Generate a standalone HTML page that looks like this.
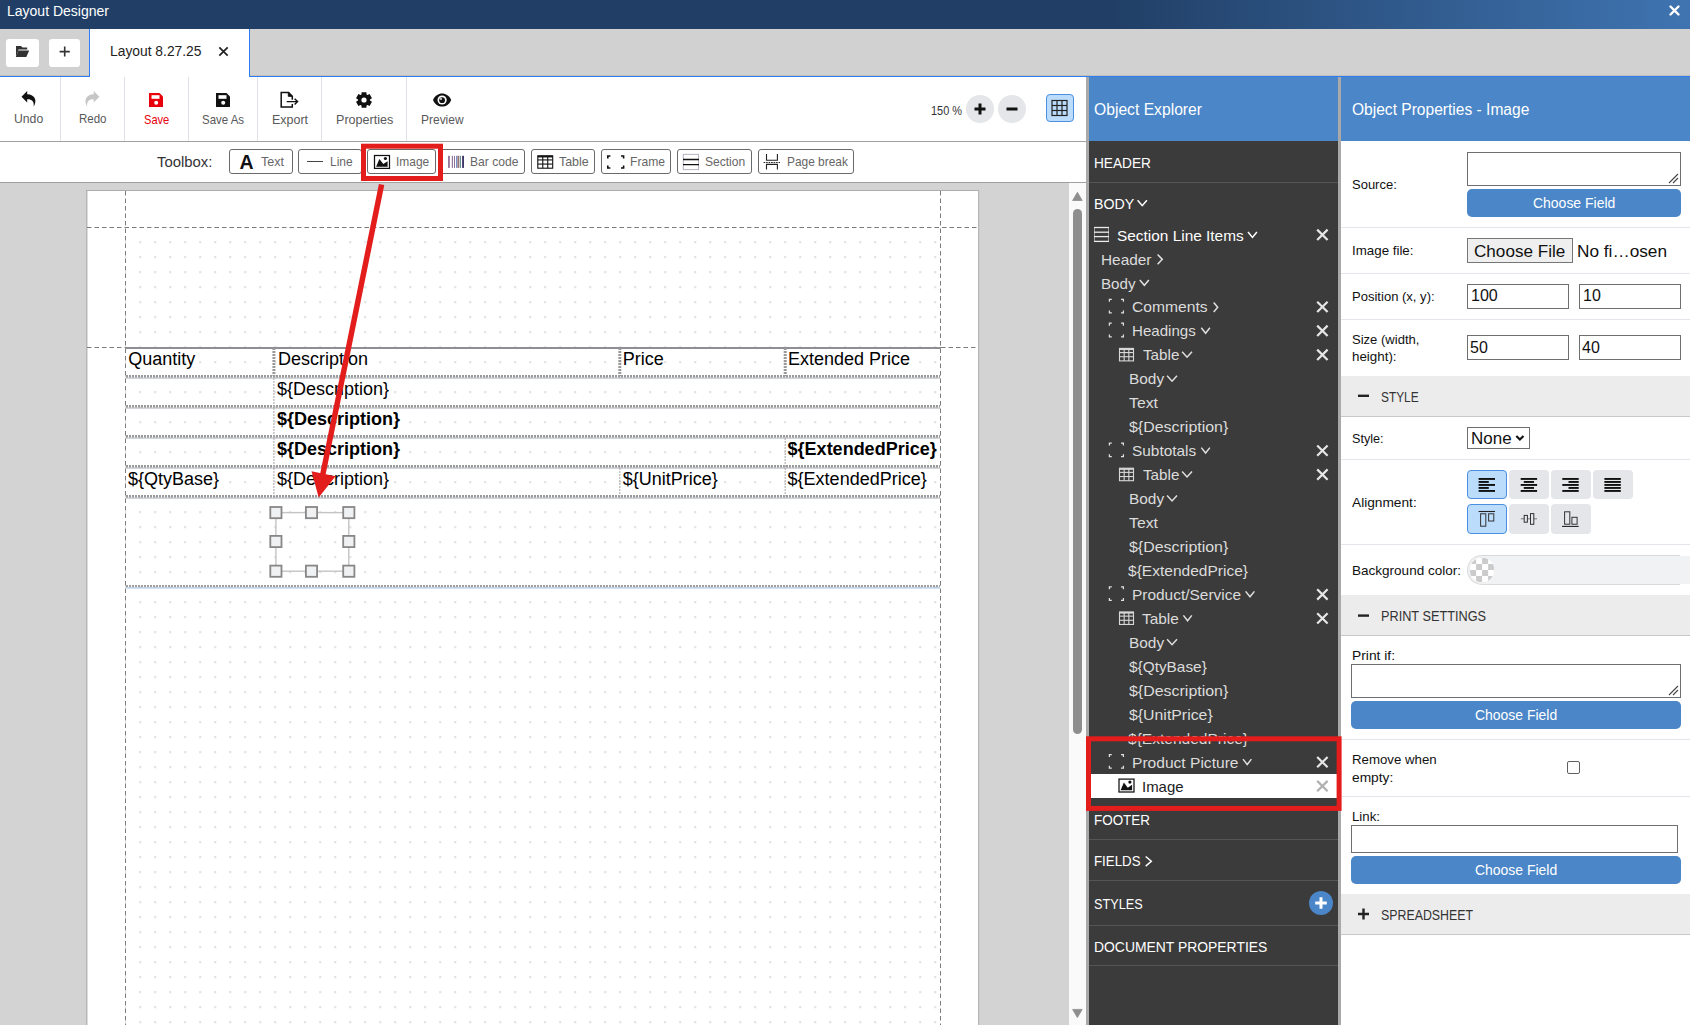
<!DOCTYPE html>
<html><head><meta charset="utf-8"><style>
*{box-sizing:border-box;margin:0;padding:0}
html,body{width:1690px;height:1025px;overflow:hidden;background:#fff;font-family:"Liberation Sans",sans-serif}
body{position:relative}
.a{position:absolute}
.t{position:absolute;white-space:nowrap;line-height:1;transform-origin:0 0}
svg{position:absolute;left:0;top:0;overflow:visible}
</style></head><body>
<div class="a" style="left:0px;top:0px;width:1690px;height:29px;background:linear-gradient(to right,#213f66 0,#213f66 1110px,#3f74b1 1690px);"></div>
<div class="a" style="left:0px;top:29px;width:1690px;height:46px;background:#d1d1d1;"></div>
<div class="a" style="left:0px;top:75px;width:1690px;height:1px;background:#c4c0b8;"></div>
<div class="a" style="left:0px;top:76px;width:1690px;height:1px;background:#2f7df6;"></div>
<div class="a" style="left:89px;top:29px;width:161px;height:48px;background:#fff;border-left:1px solid #2f7df6;border-right:1px solid #2f7df6"></div>
<div class="a" style="left:6px;top:39px;width:33px;height:28px;background:#fff;border-radius:3px"></div>
<div class="a" style="left:49px;top:39px;width:31px;height:28px;background:#fff;border-radius:3px"></div>
<div class="a" style="left:0px;top:77px;width:1086px;height:64px;background:#fff;"></div>
<div class="a" style="left:0px;top:141px;width:1086px;height:1px;background:#a0a0a0;"></div>
<div class="a" style="left:60px;top:77px;width:1px;height:64px;background:#dfe3e8;"></div>
<div class="a" style="left:124px;top:77px;width:1px;height:64px;background:#dfe3e8;"></div>
<div class="a" style="left:188px;top:77px;width:1px;height:64px;background:#dfe3e8;"></div>
<div class="a" style="left:257px;top:77px;width:1px;height:64px;background:#dfe3e8;"></div>
<div class="a" style="left:321px;top:77px;width:1px;height:64px;background:#dfe3e8;"></div>
<div class="a" style="left:406px;top:77px;width:1px;height:64px;background:#dfe3e8;"></div>
<div class="a" style="left:966px;top:95px;width:28px;height:28px;background:#e4e6e9;border-radius:50%"></div>
<div class="a" style="left:998px;top:95px;width:28px;height:28px;background:#e4e6e9;border-radius:50%"></div>
<div class="a" style="left:1046px;top:94px;width:28px;height:28px;background:#bcdcfb;border:1px solid #4a8fe0;border-radius:4px"></div>
<div class="a" style="left:0px;top:142px;width:1086px;height:40px;background:#fff;"></div>
<div class="a" style="left:0px;top:182px;width:1086px;height:1px;background:#a0a0a0;"></div>
<div class="a" style="left:229px;top:149px;width:64px;height:25px;background:#fff;border:1px solid #6a6a6a;border-radius:3px"></div>
<div class="a" style="left:298px;top:149px;width:63.5px;height:25px;background:#fff;border:1px solid #6a6a6a;border-radius:3px"></div>
<div class="a" style="left:367px;top:149px;width:69px;height:25px;background:#fff;border:1px solid #6a6a6a;border-radius:3px"></div>
<div class="a" style="left:440px;top:149px;width:85px;height:25px;background:#fff;border:1px solid #6a6a6a;border-radius:3px"></div>
<div class="a" style="left:530.5px;top:149px;width:64.5px;height:25px;background:#fff;border:1px solid #6a6a6a;border-radius:3px"></div>
<div class="a" style="left:600.5px;top:149px;width:70.5px;height:25px;background:#fff;border:1px solid #6a6a6a;border-radius:3px"></div>
<div class="a" style="left:676.5px;top:149px;width:75.5px;height:25px;background:#fff;border:1px solid #6a6a6a;border-radius:3px"></div>
<div class="a" style="left:757.5px;top:149px;width:96.5px;height:25px;background:#fff;border:1px solid #6a6a6a;border-radius:3px"></div>
<div class="a" style="left:0px;top:183px;width:1069px;height:842px;background:#d3d3d3;"></div>
<div class="a" style="left:1069px;top:183px;width:17px;height:842px;background:#fafafa;"></div>
<div class="a" style="left:1073px;top:209px;width:9px;height:525px;background:#8e8e8e;border-radius:4.5px"></div>
<div class="a" style="left:1086px;top:77px;width:3px;height:948px;background:#a9a9a9;"></div>
<div class="a" style="left:1338px;top:77px;width:3px;height:948px;background:#a9a9a9;"></div>
<div class="a" style="left:1089px;top:77px;width:249px;height:64px;background:#4a86c8;"></div>
<div class="a" style="left:1089px;top:141px;width:249px;height:884px;background:#3b3b3b;"></div>
<div class="a" style="left:1089px;top:182px;width:249px;height:1px;background:#555;"></div>
<div class="a" style="left:1089px;top:839px;width:249px;height:1px;background:#555;"></div>
<div class="a" style="left:1089px;top:880px;width:249px;height:1px;background:#555;"></div>
<div class="a" style="left:1089px;top:925px;width:249px;height:1px;background:#555;"></div>
<div class="a" style="left:1089px;top:965px;width:249px;height:1px;background:#555;"></div>
<div class="a" style="left:1089px;top:774px;width:249px;height:24px;background:#fff;"></div>
<div class="a" style="left:1309px;top:891px;width:24px;height:24px;background:#4a86c8;border-radius:50%"></div>
<div class="a" style="left:1341px;top:77px;width:349px;height:64px;background:#4a86c8;"></div>
<div class="a" style="left:1341px;top:141px;width:349px;height:884px;background:#fff;"></div>
<div class="a" style="left:1341px;top:227px;width:349px;height:1px;background:#e3e6ea;"></div>
<div class="a" style="left:1341px;top:273px;width:349px;height:1px;background:#e3e6ea;"></div>
<div class="a" style="left:1341px;top:319px;width:349px;height:1px;background:#e3e6ea;"></div>
<div class="a" style="left:1341px;top:459px;width:349px;height:1px;background:#e3e6ea;"></div>
<div class="a" style="left:1341px;top:544px;width:349px;height:1px;background:#e3e6ea;"></div>
<div class="a" style="left:1341px;top:739px;width:349px;height:1px;background:#e3e6ea;"></div>
<div class="a" style="left:1341px;top:796px;width:349px;height:1px;background:#e3e6ea;"></div>
<div class="a" style="left:1341px;top:376px;width:349px;height:40px;background:#ececec;"></div>
<div class="a" style="left:1341px;top:416px;width:349px;height:1px;background:#c8c8c8;"></div>
<div class="a" style="left:1341px;top:595px;width:349px;height:40px;background:#ececec;"></div>
<div class="a" style="left:1341px;top:635px;width:349px;height:1px;background:#c8c8c8;"></div>
<div class="a" style="left:1341px;top:894px;width:349px;height:40px;background:#ececec;"></div>
<div class="a" style="left:1341px;top:934px;width:349px;height:1px;background:#c8c8c8;"></div>
<div class="a" style="left:1467px;top:152px;width:214px;height:34px;background:#fff;border:1px solid #6f6f6f;"></div>
<div class="a" style="left:1467px;top:189px;width:214px;height:28px;background:#4a86c8;border-radius:5px"></div>
<div class="a" style="left:1467px;top:238px;width:106px;height:25px;background:#efefef;border:1px solid #767676;"></div>
<div class="a" style="left:1467px;top:284px;width:102px;height:25px;background:#fff;border:1px solid #6f6f6f;"></div>
<div class="a" style="left:1579px;top:284px;width:102px;height:25px;background:#fff;border:1px solid #6f6f6f;"></div>
<div class="a" style="left:1467px;top:335px;width:102px;height:25px;background:#fff;border:1px solid #6f6f6f;"></div>
<div class="a" style="left:1579px;top:335px;width:102px;height:25px;background:#fff;border:1px solid #6f6f6f;"></div>
<div class="a" style="left:1467px;top:427px;width:63px;height:22px;background:#fff;border:1px solid #6f6f6f;"></div>
<div class="a" style="left:1467.4px;top:470px;width:39.5px;height:29px;background:#bcdcfb;border:1px solid #4a8fe0;border-radius:4px"></div>
<div class="a" style="left:1509.4px;top:470px;width:39.5px;height:29px;background:#e4e6e9;border-radius:4px"></div>
<div class="a" style="left:1551.4px;top:470px;width:39.5px;height:29px;background:#e4e6e9;border-radius:4px"></div>
<div class="a" style="left:1593.4px;top:470px;width:39.5px;height:29px;background:#e4e6e9;border-radius:4px"></div>
<div class="a" style="left:1467.4px;top:504px;width:39.5px;height:30px;background:#bcdcfb;border:1px solid #4a8fe0;border-radius:4px"></div>
<div class="a" style="left:1509.4px;top:504px;width:39.5px;height:30px;background:#e4e6e9;border-radius:4px"></div>
<div class="a" style="left:1551.4px;top:504px;width:39.5px;height:30px;background:#e4e6e9;border-radius:4px"></div>
<div class="a" style="left:1467px;top:555px;width:213px;height:30px;background:#f1f2f4;border:1px solid #d9dadc;border-right:none;border-radius:15px 0 0 15px"></div>
<div class="a" style="left:1680px;top:556px;width:10px;height:28px;background:#f1f2f4;"></div>
<div class="a" style="left:1351px;top:664px;width:330px;height:34px;background:#fff;border:1px solid #6f6f6f;"></div>
<div class="a" style="left:1351px;top:701px;width:330px;height:28px;background:#4a86c8;border-radius:5px"></div>
<div class="a" style="left:1567px;top:761px;width:13px;height:13px;background:#fff;border:1px solid #5f5f5f;border-radius:2px"></div>
<div class="a" style="left:1351px;top:825px;width:327px;height:28px;background:#fff;border:1px solid #6f6f6f;"></div>
<div class="a" style="left:1351px;top:856px;width:330px;height:28px;background:#4a86c8;border-radius:5px"></div>
<svg width="1690" height="1025">
<defs><pattern id="dots" x="139.4" y="241.35" width="15" height="15" patternUnits="userSpaceOnUse"><rect x="0" y="0" width="1.5" height="1.5" fill="#c2c2c2"/></pattern></defs>
<rect x="86" y="190" width="894" height="840" fill="#cccccc"/>
<rect x="86" y="190" width="893" height="840" fill="#b6b6b6"/>
<rect x="87" y="191" width="891" height="840" fill="#fff"/>
<rect x="87" y="191" width="1" height="840" fill="#dedede"/>
<rect x="86" y="190" width="892" height="1" fill="#adadad"/>
<rect x="125" y="227" width="815" height="800" fill="url(#dots)"/>
<g stroke="#7c7c7c" stroke-width="1" stroke-dasharray="4.5 3" fill="none">
<line x1="125.5" y1="191" x2="125.5" y2="1025"/>
<line x1="940.5" y1="191" x2="940.5" y2="1025"/>
<line x1="87" y1="227.5" x2="978" y2="227.5"/>
<line x1="87" y1="347.5" x2="125" y2="347.5"/>
<line x1="941" y1="347.5" x2="978" y2="347.5"/>
</g>
<line x1="125" y1="348" x2="941" y2="348" stroke="#8d8f92" stroke-width="2"/>
<line x1="126" y1="376.4" x2="940" y2="376.4" stroke="#9a9a9a" stroke-width="2.6" stroke-dasharray="2 1"/>
<line x1="126" y1="378.1" x2="940" y2="378.1" stroke="#b3b8c0" stroke-width="1"/>
<line x1="126" y1="406.4" x2="940" y2="406.4" stroke="#9a9a9a" stroke-width="2.6" stroke-dasharray="2 1"/>
<line x1="126" y1="408.1" x2="940" y2="408.1" stroke="#b3b8c0" stroke-width="1"/>
<line x1="126" y1="436.4" x2="940" y2="436.4" stroke="#9a9a9a" stroke-width="2.6" stroke-dasharray="2 1"/>
<line x1="126" y1="438.1" x2="940" y2="438.1" stroke="#b3b8c0" stroke-width="1"/>
<line x1="126" y1="466.4" x2="940" y2="466.4" stroke="#9a9a9a" stroke-width="2.6" stroke-dasharray="2 1"/>
<line x1="126" y1="468.1" x2="940" y2="468.1" stroke="#b3b8c0" stroke-width="1"/>
<line x1="126" y1="496.4" x2="940" y2="496.4" stroke="#9a9a9a" stroke-width="2.6" stroke-dasharray="2 1"/>
<line x1="126" y1="498.1" x2="940" y2="498.1" stroke="#b3b8c0" stroke-width="1"/>
<line x1="126" y1="586" x2="940" y2="586" stroke="#9f9f9f" stroke-width="2" stroke-dasharray="2 1"/>
<line x1="126" y1="587.8" x2="940" y2="587.8" stroke="#a9c3e2" stroke-width="1.2"/>
<line x1="273.9" y1="348" x2="273.9" y2="376" stroke="#999" stroke-width="3" stroke-dasharray="2 1"/>
<line x1="273.9" y1="378" x2="273.9" y2="496" stroke="#b5b5b5" stroke-width="1.2" stroke-dasharray="2 1"/>
<line x1="619.8" y1="348" x2="619.8" y2="376" stroke="#999" stroke-width="3" stroke-dasharray="2 1"/>
<line x1="619.8" y1="468" x2="619.8" y2="496" stroke="#b5b5b5" stroke-width="1.2" stroke-dasharray="2 1"/>
<line x1="785.2" y1="348" x2="785.2" y2="376" stroke="#999" stroke-width="3" stroke-dasharray="2 1"/>
<line x1="785.2" y1="438" x2="785.2" y2="496" stroke="#b5b5b5" stroke-width="1.2" stroke-dasharray="2 1"/>
<rect x="275.9" y="512.6" width="72.9" height="58.6" fill="none" stroke="#c4c4c4" stroke-width="1.4"/>
<rect x="270.29999999999995" y="507.0" width="11.2" height="11.2" fill="#f0f1f3" stroke="#878787" stroke-width="1.8"/>
<rect x="270.29999999999995" y="535.9" width="11.2" height="11.2" fill="#f0f1f3" stroke="#878787" stroke-width="1.8"/>
<rect x="270.29999999999995" y="565.6" width="11.2" height="11.2" fill="#f0f1f3" stroke="#878787" stroke-width="1.8"/>
<rect x="305.9" y="507.0" width="11.2" height="11.2" fill="#f0f1f3" stroke="#878787" stroke-width="1.8"/>
<rect x="305.9" y="565.6" width="11.2" height="11.2" fill="#f0f1f3" stroke="#878787" stroke-width="1.8"/>
<rect x="343.2" y="507.0" width="11.2" height="11.2" fill="#f0f1f3" stroke="#878787" stroke-width="1.8"/>
<rect x="343.2" y="535.9" width="11.2" height="11.2" fill="#f0f1f3" stroke="#878787" stroke-width="1.8"/>
<rect x="343.2" y="565.6" width="11.2" height="11.2" fill="#f0f1f3" stroke="#878787" stroke-width="1.8"/>
</svg>
<div class="t" style="left:7.0px;top:4px;font-size:14px;color:#fff;transform:scaleX(1.0005);">Layout Designer</div>
<div class="t" style="left:110.3px;top:44px;font-size:14px;color:#222;transform:scaleX(0.9877);">Layout 8.27.25</div>
<div class="t" style="left:13.8px;top:112px;font-size:13px;color:#595959;transform:scaleX(0.9396);">Undo</div>
<div class="t" style="left:78.5px;top:112px;font-size:13px;color:#595959;transform:scaleX(0.8849);">Redo</div>
<div class="t" style="left:143.5px;top:113px;font-size:13px;color:#e8000b;transform:scaleX(0.8536);">Save</div>
<div class="t" style="left:202.0px;top:113px;font-size:13px;color:#595959;transform:scaleX(0.8804);">Save As</div>
<div class="t" style="left:271.7px;top:113px;font-size:13px;color:#595959;transform:scaleX(0.9580);">Export</div>
<div class="t" style="left:335.6px;top:113px;font-size:13px;color:#595959;transform:scaleX(0.9671);">Properties</div>
<div class="t" style="left:420.9px;top:113px;font-size:13px;color:#595959;transform:scaleX(0.9211);">Preview</div>
<div class="t" style="left:931.0px;top:105px;font-size:12px;color:#333;transform:scaleX(0.9109);">150 %</div>
<div class="t" style="left:157.1px;top:155px;font-size:14px;color:#333;transform:scaleX(1.0622);">Toolbox:</div>
<div class="t" style="left:261.0px;top:155px;font-size:13px;color:#666;transform:scaleX(0.9646);">Text</div>
<div class="t" style="left:329.8px;top:155px;font-size:13px;color:#666;transform:scaleX(0.9195);">Line</div>
<div class="t" style="left:396.4px;top:155px;font-size:13px;color:#666;transform:scaleX(0.9186);">Image</div>
<div class="t" style="left:470.4px;top:155px;font-size:13px;color:#666;transform:scaleX(0.9299);">Bar code</div>
<div class="t" style="left:559.4px;top:155px;font-size:13px;color:#666;transform:scaleX(0.9557);">Table</div>
<div class="t" style="left:630.0px;top:155px;font-size:13px;color:#666;transform:scaleX(0.9318);">Frame</div>
<div class="t" style="left:704.9px;top:155px;font-size:13px;color:#666;transform:scaleX(0.9268);">Section</div>
<div class="t" style="left:786.6px;top:155px;font-size:13px;color:#666;transform:scaleX(0.9158);">Page break</div>
<div class="t" style="left:128.3px;top:350px;font-size:18px;color:#000;">Quantity</div>
<div class="t" style="left:278.0px;top:350px;font-size:18px;color:#000;">Description</div>
<div class="t" style="left:622.8px;top:350px;font-size:18px;color:#000;">Price</div>
<div class="t" style="left:788.0px;top:350px;font-size:18px;color:#000;">Extended Price</div>
<div class="t" style="left:277.0px;top:380px;font-size:18px;color:#000;">${Description}</div>
<div class="t" style="left:277.0px;top:410px;font-size:18px;color:#000;font-weight:bold;">${Description}</div>
<div class="t" style="left:277.0px;top:440px;font-size:18px;color:#000;font-weight:bold;">${Description}</div>
<div class="t" style="left:787.6px;top:440px;font-size:18px;color:#000;font-weight:bold;">${ExtendedPrice}</div>
<div class="t" style="left:128.0px;top:470px;font-size:18px;color:#000;">${QtyBase}</div>
<div class="t" style="left:277.0px;top:470px;font-size:18px;color:#000;">${Description}</div>
<div class="t" style="left:622.8px;top:470px;font-size:18px;color:#000;">${UnitPrice}</div>
<div class="t" style="left:787.6px;top:470px;font-size:18px;color:#000;">${ExtendedPrice}</div>
<div class="t" style="left:1093.5px;top:102px;font-size:16px;color:#fff;transform:scaleX(0.9795);">Object Explorer</div>
<div class="t" style="left:1351.6px;top:102px;font-size:16px;color:#fff;transform:scaleX(0.9726);">Object Properties - Image</div>
<div class="t" style="left:1094.1px;top:155px;font-size:15.5px;color:#ffffff;transform:scaleX(0.8822);">HEADER</div>
<div class="t" style="left:1094.1px;top:196px;font-size:15.5px;color:#ffffff;transform:scaleX(0.9149);">BODY</div>
<div class="t" style="left:1116.8px;top:228px;font-size:15px;color:#ffffff;transform:scaleX(1.0267);">Section Line Items</div>
<div class="t" style="left:1101.2px;top:252px;font-size:15px;color:#dcdcdc;transform:scaleX(1.0264);">Header</div>
<div class="t" style="left:1101.2px;top:276px;font-size:15px;color:#dcdcdc;transform:scaleX(1.0116);">Body</div>
<div class="t" style="left:1132.3px;top:299px;font-size:15px;color:#dcdcdc;transform:scaleX(1.0423);">Comments</div>
<div class="t" style="left:1132.3px;top:323px;font-size:15px;color:#dcdcdc;transform:scaleX(1.0049);">Headings</div>
<div class="t" style="left:1142.5px;top:347px;font-size:15px;color:#dcdcdc;transform:scaleX(1.0151);">Table</div>
<div class="t" style="left:1128.8px;top:371px;font-size:15px;color:#dcdcdc;transform:scaleX(1.0262);">Body</div>
<div class="t" style="left:1128.8px;top:395px;font-size:15px;color:#dcdcdc;transform:scaleX(1.0539);">Text</div>
<div class="t" style="left:1128.8px;top:419px;font-size:15px;color:#dcdcdc;transform:scaleX(1.0631);">${Description}</div>
<div class="t" style="left:1132.3px;top:443px;font-size:15px;color:#dcdcdc;transform:scaleX(1.0264);">Subtotals</div>
<div class="t" style="left:1142.5px;top:467px;font-size:15px;color:#dcdcdc;transform:scaleX(1.0151);">Table</div>
<div class="t" style="left:1128.8px;top:491px;font-size:15px;color:#dcdcdc;transform:scaleX(1.0262);">Body</div>
<div class="t" style="left:1128.8px;top:515px;font-size:15px;color:#dcdcdc;transform:scaleX(1.0539);">Text</div>
<div class="t" style="left:1128.8px;top:539px;font-size:15px;color:#dcdcdc;transform:scaleX(1.0631);">${Description}</div>
<div class="t" style="left:1128.3px;top:563px;font-size:15px;color:#dcdcdc;transform:scaleX(1.0352);">${ExtendedPrice}</div>
<div class="t" style="left:1132.1px;top:587px;font-size:15px;color:#dcdcdc;transform:scaleX(1.0294);">Product/Service</div>
<div class="t" style="left:1142.2px;top:611px;font-size:15px;color:#dcdcdc;transform:scaleX(1.0262);">Table</div>
<div class="t" style="left:1128.8px;top:635px;font-size:15px;color:#dcdcdc;transform:scaleX(1.0262);">Body</div>
<div class="t" style="left:1128.8px;top:659px;font-size:15px;color:#dcdcdc;transform:scaleX(1.0252);">${QtyBase}</div>
<div class="t" style="left:1128.8px;top:683px;font-size:15px;color:#dcdcdc;transform:scaleX(1.0631);">${Description}</div>
<div class="t" style="left:1128.8px;top:707px;font-size:15px;color:#dcdcdc;transform:scaleX(1.0566);">${UnitPrice}</div>
<div class="t" style="left:1128.3px;top:731px;font-size:15px;color:#dcdcdc;transform:scaleX(1.0352);">${ExtendedPrice}</div>
<div class="t" style="left:1132.1px;top:755px;font-size:15px;color:#dcdcdc;transform:scaleX(1.0385);">Product Picture</div>
<div class="t" style="left:1141.7px;top:779px;font-size:15px;color:#222;transform:scaleX(0.9975);">Image</div>
<div class="t" style="left:1093.9px;top:812px;font-size:15.5px;color:#ffffff;transform:scaleX(0.8670);">FOOTER</div>
<div class="t" style="left:1093.9px;top:853px;font-size:15.5px;color:#ffffff;transform:scaleX(0.8569);">FIELDS</div>
<div class="t" style="left:1093.9px;top:896px;font-size:15.5px;color:#ffffff;transform:scaleX(0.8191);">STYLES</div>
<div class="t" style="left:1093.9px;top:939px;font-size:15.5px;color:#ffffff;transform:scaleX(0.8969);">DOCUMENT PROPERTIES</div>
<div class="t" style="left:1351.5px;top:178px;font-size:13px;color:#111;transform:scaleX(0.9997);">Source:</div>
<div class="t" style="left:1532.6px;top:196px;font-size:14px;color:#fff;transform:scaleX(0.9976);">Choose Field</div>
<div class="t" style="left:1351.5px;top:244px;font-size:13px;color:#111;transform:scaleX(1.0253);">Image file:</div>
<div class="t" style="left:1474.3px;top:243px;font-size:17px;color:#111;transform:scaleX(1.0064);">Choose File</div>
<div class="t" style="left:1577.2px;top:243px;font-size:17px;color:#111;transform:scaleX(1.0132);">No fi…osen</div>
<div class="t" style="left:1351.5px;top:290px;font-size:13px;color:#111;transform:scaleX(1.0029);">Position (x, y):</div>
<div class="t" style="left:1471.1px;top:288px;font-size:16px;color:#111;transform:scaleX(1.0036);">100</div>
<div class="t" style="left:1583.0px;top:288px;font-size:16px;color:#111;">10</div>
<div class="t" style="left:1351.7px;top:333px;font-size:13px;color:#111;transform:scaleX(1.0029);">Size (width,</div>
<div class="t" style="left:1351.7px;top:350px;font-size:13px;color:#111;transform:scaleX(1.0282);">height):</div>
<div class="t" style="left:1470.0px;top:340px;font-size:16px;color:#111;">50</div>
<div class="t" style="left:1582.0px;top:340px;font-size:16px;color:#111;">40</div>
<div class="t" style="left:1380.6px;top:390px;font-size:14px;color:#333;transform:scaleX(0.8476);">STYLE</div>
<div class="t" style="left:1351.7px;top:432px;font-size:13px;color:#111;transform:scaleX(0.9718);">Style:</div>
<div class="t" style="left:1471.4px;top:430px;font-size:17px;color:#111;transform:scaleX(0.9990);">None</div>
<div class="t" style="left:1351.7px;top:496px;font-size:13px;color:#111;transform:scaleX(1.0534);">Alignment:</div>
<div class="t" style="left:1351.7px;top:564px;font-size:13px;color:#111;transform:scaleX(1.0403);">Background color:</div>
<div class="t" style="left:1380.7px;top:609px;font-size:14px;color:#333;transform:scaleX(0.9079);">PRINT SETTINGS</div>
<div class="t" style="left:1351.7px;top:649px;font-size:13px;color:#111;transform:scaleX(1.0625);">Print if:</div>
<div class="t" style="left:1475.2px;top:708px;font-size:14px;color:#fff;transform:scaleX(0.9964);">Choose Field</div>
<div class="t" style="left:1351.7px;top:753px;font-size:13px;color:#111;transform:scaleX(1.0191);">Remove when</div>
<div class="t" style="left:1351.7px;top:771px;font-size:13px;color:#111;transform:scaleX(1.0586);">empty:</div>
<div class="t" style="left:1351.7px;top:810px;font-size:13px;color:#111;transform:scaleX(1.0193);">Link:</div>
<div class="t" style="left:1475.2px;top:863px;font-size:14px;color:#fff;transform:scaleX(0.9964);">Choose Field</div>
<div class="t" style="left:1380.7px;top:908px;font-size:14px;color:#333;transform:scaleX(0.8825);">SPREADSHEET</div>
<svg width="1690" height="1025">
<path d="M1670.5 6.5 L1678.5 14.5 M1678.5 6.5 L1670.5 14.5" stroke="#fff" stroke-width="2.4" stroke-linecap="round"/>
<path d="M16 46 H21 L22.6 47.6 H27.2 V49.6 H18.6 L16 56.9 Z" fill="#333"/>
<path d="M18.4 50.4 H29.2 L26.3 56.9 H15.8 Z" fill="#333"/>
<path d="M59.6 51.6 H69.8 M64.7 46.6 V56.6" stroke="#333" stroke-width="1.6"/>
<path d="M219.3 47.3 L227.7 55.7 M227.7 47.3 L219.3 55.7" stroke="#222" stroke-width="1.7"/>
<path d="M27.2 91 L21.5 96.8 L27.2 102.4 V99.2 C31.5 99 34.5 101 33.6 106.8 C37.5 100.5 35 94.5 27.2 94.3 Z" fill="#111"/>
<g transform="translate(186.5 0) scale(-1 1)"><path d="M92.8 91 L87.1 96.8 L92.8 102.4 V99.2 C97.1 99 100.1 101 99.2 106.8 C103.1 100.5 100.6 94.5 92.8 94.3 Z" fill="#c6c6c6"/></g>
<path d="M149 93 H159.5 L163 96.5 V107 H149 Z" fill="#e8000b"/><rect x="151.5" y="95.2" width="8" height="3.6" fill="#fff"/><circle cx="156.2" cy="102.8" r="2" fill="#fff"/>
<path d="M216 93 H226.5 L230 96.5 V107 H216 Z" fill="#111"/><rect x="218.5" y="95.2" width="8" height="3.6" fill="#fff"/><circle cx="223.2" cy="102.8" r="2" fill="#fff"/>
<path d="M292.3 99.7 V96.2 L288.6 92.5 H281.2 V107 H292.3 V103.9" fill="none" stroke="#111" stroke-width="1.5"/>
<path d="M288.3 92.5 V96.3 H292.3 Z" fill="#111" stroke="#111" stroke-width="1"/>
<path d="M286.7 101.6 H297.6 M294.6 98.7 L297.6 101.6 L294.6 104.5" fill="none" stroke="#111" stroke-width="1.4"/>
<polygon points="361.60,92.16 366.40,92.16 366.54,94.56 367.44,95.09 369.59,94.00 371.99,98.16 369.98,99.48 369.98,100.52 371.99,101.84 369.59,106.00 367.44,104.91 366.54,105.44 366.40,107.84 361.60,107.84 361.46,105.44 360.56,104.91 358.41,106.00 356.01,101.84 358.02,100.52 358.02,99.48 356.01,98.16 358.41,94.00 360.56,95.09 361.46,94.56" fill="#111"/>
<circle cx="364" cy="100" r="2.6" fill="#fff"/>
<path d="M433 100 C436.5 91.2 447.7 91.2 451.2 100 C447.7 108.8 436.5 108.8 433 100 Z" fill="#111"/>
<circle cx="442.1" cy="100" r="4.6" fill="#fff"/>
<circle cx="442.1" cy="100.2" r="2.9" fill="#111"/>
<circle cx="441" cy="99" r="0.9" fill="#fff"/>
<path d="M974.5 109 H985.5 M980 103.5 V114.5" stroke="#111" stroke-width="3"/>
<path d="M1006.5 109 H1017.5" stroke="#111" stroke-width="3"/>
<rect x="1052" y="100.5" width="15" height="15.0" fill="none" stroke="#222" stroke-width="1.2"/><line x1="1057.00" y1="100.5" x2="1057.00" y2="115.5" stroke="#222" stroke-width="1.2"/><line x1="1062.00" y1="100.5" x2="1062.00" y2="115.5" stroke="#222" stroke-width="1.2"/><line x1="1052" y1="105.50" x2="1067" y2="105.50" stroke="#222" stroke-width="1.2"/><line x1="1052" y1="110.50" x2="1067" y2="110.50" stroke="#222" stroke-width="1.2"/>
<path d="M1077.4 192.3 L1082.2 200.5 H1072.6 Z" fill="#8e8e8e" stroke="#8e8e8e" stroke-width="0.8" stroke-linejoin="round"/>
<path d="M1077.4 1017.6 L1082.2 1009.4 H1072.6 Z" fill="#8e8e8e" stroke="#8e8e8e" stroke-width="0.8" stroke-linejoin="round"/>
<text x="239.6" y="169" font-family="Liberation Sans" font-weight="bold" font-size="19.5" fill="#111">A</text>
<line x1="307" y1="161.5" x2="323" y2="161.5" stroke="#444" stroke-width="1"/>
<rect x="374.5" y="155.5" width="15" height="12.9" fill="#fff" stroke="#111" stroke-width="1.25"/><path d="M376.1 166.7 L379.4 159 L383.3 164.1 L387.6 161.2 V166.7 Z" fill="#111"/><circle cx="385.4" cy="158.5" r="1.6" fill="#111"/>
<rect x="448.1" y="155.8" width="1.7" height="12.1" fill="#8a6a92"/>
<rect x="451.8" y="155.8" width="1.1" height="12.1" fill="#8a6a92"/>
<rect x="454.0" y="155.8" width="0.95" height="12.1" fill="#8a6a92"/>
<rect x="456.1" y="155.8" width="1.1" height="12.1" fill="#6a88c8"/>
<rect x="457.4" y="155.8" width="1.8" height="12.1" fill="#957272"/>
<rect x="459.8" y="155.8" width="1.2" height="12.1" fill="#6a8f92"/>
<rect x="462.1" y="155.8" width="1.9" height="12.1" fill="#3f386a"/>
<rect x="537.8" y="155.8" width="14.900000000000091" height="12.399999999999977" fill="none" stroke="#111" stroke-width="1.1"/><line x1="542.77" y1="155.8" x2="542.77" y2="168.2" stroke="#111" stroke-width="1.1"/><line x1="547.73" y1="155.8" x2="547.73" y2="168.2" stroke="#111" stroke-width="1.1"/><line x1="537.8" y1="159.93" x2="552.7" y2="159.93" stroke="#111" stroke-width="1.1"/><line x1="537.8" y1="164.07" x2="552.7" y2="164.07" stroke="#111" stroke-width="1.1"/><line x1="537.8" y1="156.60000000000002" x2="552.7" y2="156.60000000000002" stroke="#111" stroke-width="1.7000000000000002"/>
<path d="M607.8 158.6 V156 H610.4 M621.0 156 H623.6 V158.6 M623.6 165.4 V168 H621.0 M610.4 168 H607.8 V165.4" fill="none" stroke="#111" stroke-width="1.6"/>
<rect x="683.3" y="154.4" width="15.2" height="15.2" fill="none" stroke="#b4b4c4" stroke-width="1"/>
<path d="M683 159.5 H699 M683 164.6 H699" stroke="#111" stroke-width="1.3"/>
<path d="M766.5 154 V160.2 H777.4 V154 M766.5 169.6 V164.4 H777.4 V169.6" fill="none" stroke="#222" stroke-width="1.1"/>
<path d="M763.6 162.5 H780" stroke="#222" stroke-width="1" stroke-dasharray="1.6 0.9"/>
<path d="M1094.5 227 V242 M1108.5 227 V242" stroke="#9a9a9a" stroke-width="1"/>
<line x1="1094" y1="227.5" x2="1109" y2="227.5" stroke="#ececec" stroke-width="1.3"/>
<line x1="1094" y1="232.2" x2="1109" y2="232.2" stroke="#ececec" stroke-width="1.3"/>
<line x1="1094" y1="236.6" x2="1109" y2="236.6" stroke="#ececec" stroke-width="1.3"/>
<line x1="1094" y1="241.4" x2="1109" y2="241.4" stroke="#ececec" stroke-width="1.3"/>
<path d="M1137.6 200.3 L1142.25 205.70000000000002 L1146.9 200.3" fill="none" stroke="#fff" stroke-width="1.5"/>
<path d="M1248.0 232.0 L1252.45 237.4 L1256.9 232.0" fill="none" stroke="#fff" stroke-width="1.5"/>
<path d="M1317.2 229.60000000000002 L1327.6000000000001 240.0 M1327.6000000000001 229.60000000000002 L1317.2 240.0" stroke="#e6e6e6" stroke-width="2.2"/>
<path d="M1157.6000000000001 254.56 L1162.3 259.36 L1157.6000000000001 264.16" fill="none" stroke="#e0e0e0" stroke-width="1.5"/>
<path d="M1139.8 279.91999999999996 L1144.35 285.32 L1148.9 279.91999999999996" fill="none" stroke="#e0e0e0" stroke-width="1.5"/>
<path d="M1109.4 301.68 V299.28000000000003 H1111.8000000000002 M1121.0 299.28000000000003 H1123.4 V301.68 M1123.4 310.48 V312.88 H1121.0 M1111.8000000000002 312.88 H1109.4 V310.48" fill="none" stroke="#e0e0e0" stroke-width="1.25"/>
<path d="M1109.4 325.64 V323.24 H1111.8000000000002 M1121.0 323.24 H1123.4 V325.64 M1123.4 334.44 V336.84 H1121.0 M1111.8000000000002 336.84 H1109.4 V334.44" fill="none" stroke="#e0e0e0" stroke-width="1.25"/>
<path d="M1109.4 445.44 V443.04 H1111.8000000000002 M1121.0 443.04 H1123.4 V445.44 M1123.4 454.24 V456.64 H1121.0 M1111.8000000000002 456.64 H1109.4 V454.24" fill="none" stroke="#e0e0e0" stroke-width="1.25"/>
<path d="M1109.4 589.1999999999999 V586.8 H1111.8000000000002 M1121.0 586.8 H1123.4 V589.1999999999999 M1123.4 598.0 V600.4 H1121.0 M1111.8000000000002 600.4 H1109.4 V598.0" fill="none" stroke="#e0e0e0" stroke-width="1.25"/>
<path d="M1109.4 756.92 V754.52 H1111.8000000000002 M1121.0 754.52 H1123.4 V756.92 M1123.4 765.72 V768.12 H1121.0 M1111.8000000000002 768.12 H1109.4 V765.72" fill="none" stroke="#e0e0e0" stroke-width="1.25"/>
<path d="M1213.7 302.48 L1217.7 307.28000000000003 L1213.7 312.08000000000004" fill="none" stroke="#e0e0e0" stroke-width="1.5"/>
<path d="M1201.3 327.84 L1205.6 333.24 L1209.9 327.84" fill="none" stroke="#e0e0e0" stroke-width="1.5"/>
<path d="M1182.1 351.79999999999995 L1187.05 357.2 L1192.0 351.79999999999995" fill="none" stroke="#e0e0e0" stroke-width="1.5"/>
<path d="M1167.1 375.76 L1172.05 381.16 L1177.0 375.76" fill="none" stroke="#e0e0e0" stroke-width="1.5"/>
<path d="M1201.3 447.64 L1205.6 453.04 L1209.9 447.64" fill="none" stroke="#e0e0e0" stroke-width="1.5"/>
<path d="M1182.1 471.6 L1187.05 477.00000000000006 L1192.0 471.6" fill="none" stroke="#e0e0e0" stroke-width="1.5"/>
<path d="M1167.1 495.55999999999995 L1172.05 500.96 L1177.0 495.55999999999995" fill="none" stroke="#e0e0e0" stroke-width="1.5"/>
<path d="M1245.6 591.4 L1250.0 596.8 L1254.4 591.4" fill="none" stroke="#e0e0e0" stroke-width="1.5"/>
<path d="M1183.3999999999999 615.36 L1187.6 620.76 L1191.8000000000002 615.36" fill="none" stroke="#e0e0e0" stroke-width="1.5"/>
<path d="M1167.1 639.3199999999999 L1172.05 644.7199999999999 L1177.0 639.3199999999999" fill="none" stroke="#e0e0e0" stroke-width="1.5"/>
<path d="M1243.0 759.12 L1247.2 764.52 L1251.4 759.12" fill="none" stroke="#e0e0e0" stroke-width="1.5"/>
<rect x="1119.5" y="348.4" width="14.0" height="12.5" fill="none" stroke="#d8d8d8" stroke-width="1.1"/><line x1="1124.17" y1="348.4" x2="1124.17" y2="360.9" stroke="#d8d8d8" stroke-width="1.1"/><line x1="1128.83" y1="348.4" x2="1128.83" y2="360.9" stroke="#d8d8d8" stroke-width="1.1"/><line x1="1119.5" y1="352.57" x2="1133.5" y2="352.57" stroke="#d8d8d8" stroke-width="1.1"/><line x1="1119.5" y1="356.73" x2="1133.5" y2="356.73" stroke="#d8d8d8" stroke-width="1.1"/><line x1="1119.5" y1="349.2" x2="1133.5" y2="349.2" stroke="#d8d8d8" stroke-width="1.7000000000000002"/>
<rect x="1119.5" y="468.20000000000005" width="14.0" height="12.5" fill="none" stroke="#d8d8d8" stroke-width="1.1"/><line x1="1124.17" y1="468.20000000000005" x2="1124.17" y2="480.70000000000005" stroke="#d8d8d8" stroke-width="1.1"/><line x1="1128.83" y1="468.20000000000005" x2="1128.83" y2="480.70000000000005" stroke="#d8d8d8" stroke-width="1.1"/><line x1="1119.5" y1="472.37" x2="1133.5" y2="472.37" stroke="#d8d8d8" stroke-width="1.1"/><line x1="1119.5" y1="476.53" x2="1133.5" y2="476.53" stroke="#d8d8d8" stroke-width="1.1"/><line x1="1119.5" y1="469.00000000000006" x2="1133.5" y2="469.00000000000006" stroke="#d8d8d8" stroke-width="1.7000000000000002"/>
<rect x="1119.5" y="611.96" width="14.0" height="12.5" fill="none" stroke="#d8d8d8" stroke-width="1.1"/><line x1="1124.17" y1="611.96" x2="1124.17" y2="624.46" stroke="#d8d8d8" stroke-width="1.1"/><line x1="1128.83" y1="611.96" x2="1128.83" y2="624.46" stroke="#d8d8d8" stroke-width="1.1"/><line x1="1119.5" y1="616.13" x2="1133.5" y2="616.13" stroke="#d8d8d8" stroke-width="1.1"/><line x1="1119.5" y1="620.29" x2="1133.5" y2="620.29" stroke="#d8d8d8" stroke-width="1.1"/><line x1="1119.5" y1="612.76" x2="1133.5" y2="612.76" stroke="#d8d8d8" stroke-width="1.7000000000000002"/>
<path d="M1317.2 301.68 L1327.6000000000001 312.08 M1327.6000000000001 301.68 L1317.2 312.08" stroke="#e6e6e6" stroke-width="2.2"/>
<path d="M1317.2 325.64 L1327.6000000000001 336.03999999999996 M1327.6000000000001 325.64 L1317.2 336.03999999999996" stroke="#e6e6e6" stroke-width="2.2"/>
<path d="M1317.2 349.59999999999997 L1327.6000000000001 359.99999999999994 M1327.6000000000001 349.59999999999997 L1317.2 359.99999999999994" stroke="#e6e6e6" stroke-width="2.2"/>
<path d="M1317.2 445.44 L1327.6000000000001 455.84 M1327.6000000000001 445.44 L1317.2 455.84" stroke="#e6e6e6" stroke-width="2.2"/>
<path d="M1317.2 469.40000000000003 L1327.6000000000001 479.8 M1327.6000000000001 469.40000000000003 L1317.2 479.8" stroke="#e6e6e6" stroke-width="2.2"/>
<path d="M1317.2 589.1999999999999 L1327.6000000000001 599.6 M1327.6000000000001 589.1999999999999 L1317.2 599.6" stroke="#e6e6e6" stroke-width="2.2"/>
<path d="M1317.2 613.16 L1327.6000000000001 623.5600000000001 M1327.6000000000001 613.16 L1317.2 623.5600000000001" stroke="#e6e6e6" stroke-width="2.2"/>
<path d="M1317.2 756.92 L1327.6000000000001 767.32 M1327.6000000000001 756.92 L1317.2 767.32" stroke="#e6e6e6" stroke-width="2.2"/>
<rect x="1119.0" y="779.1" width="15" height="12.9" fill="#fff" stroke="#111" stroke-width="1.25"/><path d="M1120.6 790.3000000000001 L1123.9 782.6 L1127.8 787.7 L1132.1 784.8000000000001 V790.3000000000001 Z" fill="#111"/><circle cx="1129.9" cy="782.1" r="1.6" fill="#111"/>
<path d="M1317.2 780.88 L1327.6000000000001 791.2800000000001 M1327.6000000000001 780.88 L1317.2 791.2800000000001" stroke="#b0b0b0" stroke-width="2.2"/>
<path d="M1145.7 856.5 L1151.3 861.3 L1145.7 866.1" fill="none" stroke="#fff" stroke-width="1.5"/>
<path d="M1321 897.2 V908.8 M1315.2 903 H1326.8" stroke="#fff" stroke-width="3"/>
<path d="M1669 183 L1678 174 M1673 183 L1678 178" stroke="#444" stroke-width="1.1"/>
<path d="M1669 695 L1678 686 M1673 695 L1678 690" stroke="#444" stroke-width="1.1"/>
<path d="M1516.3 436 L1519.9 439.6 L1523.5 436" fill="none" stroke="#111" stroke-width="2.1"/>
<path d="M1358 395.8 H1369" stroke="#222" stroke-width="2.4"/>
<path d="M1358 615.6 H1369" stroke="#222" stroke-width="2.4"/>
<path d="M1358 914 H1369 M1363.5 908.5 V919.5" stroke="#222" stroke-width="2.4"/>
<rect x="1478.60" y="478.00" width="16.4" height="1.9" fill="#111"/><rect x="1478.60" y="481.00" width="10.2" height="1.9" fill="#111"/><rect x="1478.60" y="484.00" width="16.4" height="1.9" fill="#111"/><rect x="1478.60" y="487.00" width="10.2" height="1.9" fill="#111"/><rect x="1478.60" y="490.00" width="16.4" height="1.9" fill="#111"/>
<rect x="1520.70" y="478.00" width="16.4" height="1.9" fill="#111"/><rect x="1523.80" y="481.00" width="10.2" height="1.9" fill="#111"/><rect x="1520.70" y="484.00" width="16.4" height="1.9" fill="#111"/><rect x="1523.80" y="487.00" width="10.2" height="1.9" fill="#111"/><rect x="1520.70" y="490.00" width="16.4" height="1.9" fill="#111"/>
<rect x="1562.30" y="478.00" width="16.4" height="1.9" fill="#111"/><rect x="1568.50" y="481.00" width="10.2" height="1.9" fill="#111"/><rect x="1562.30" y="484.00" width="16.4" height="1.9" fill="#111"/><rect x="1568.50" y="487.00" width="10.2" height="1.9" fill="#111"/><rect x="1562.30" y="490.00" width="16.4" height="1.9" fill="#111"/>
<rect x="1604.40" y="478.00" width="16.4" height="1.9" fill="#111"/><rect x="1604.40" y="481.00" width="16.4" height="1.9" fill="#111"/><rect x="1604.40" y="484.00" width="16.4" height="1.9" fill="#111"/><rect x="1604.40" y="487.00" width="16.4" height="1.9" fill="#111"/><rect x="1604.40" y="490.00" width="16.4" height="1.9" fill="#111"/>
<path d="M1478.6 511.5 H1495" stroke="#222" stroke-width="1.1"/><rect x="1480.6" y="513.8" width="5.2" height="12.4" fill="none" stroke="#333" stroke-width="1"/><rect x="1488.6" y="513.8" width="5.2" height="7.2" fill="none" stroke="#333" stroke-width="1"/>
<path d="M1520.8 518.8 H1537" stroke="#777" stroke-width="1"/><rect x="1524.2" y="515.4" width="3.2" height="6.8" fill="#e4e6e9" stroke="#333" stroke-width="1"/><rect x="1530.5" y="513.6" width="3.3" height="10.7" fill="#e4e6e9" stroke="#333" stroke-width="1"/>
<path d="M1562 526.4 H1578.7" stroke="#222" stroke-width="1.1"/><rect x="1564.6" y="511.8" width="5.2" height="12.4" fill="none" stroke="#333" stroke-width="1"/><rect x="1571.9" y="517.3" width="5.2" height="6.9" fill="none" stroke="#333" stroke-width="1"/>
<defs><pattern id="chk" x="1464.1" y="552" width="12" height="12" patternUnits="userSpaceOnUse"><rect width="12" height="12" fill="#fff"/><rect width="6" height="6" fill="#cbcbcb"/><rect x="6" y="6" width="6" height="6" fill="#cbcbcb"/></pattern></defs>
<circle cx="1482" cy="570" r="12.2" fill="url(#chk)"/>
</svg>
<svg width="1690" height="1025">
<rect x="363.5" y="146.2" width="77" height="32.3" fill="none" stroke="#e31c1c" stroke-width="5"/>
<rect x="1088.5" y="738.8" width="250.6" height="69.6" fill="none" stroke="#e31c1c" stroke-width="5"/>
<line x1="381.6" y1="184.5" x2="322.5" y2="476" stroke="#e31c1c" stroke-width="5.5"/>
<polygon points="311.5,471.3 335.5,476.3 318.7,497.6" fill="#e31c1c"/>
</svg>
</body></html>
